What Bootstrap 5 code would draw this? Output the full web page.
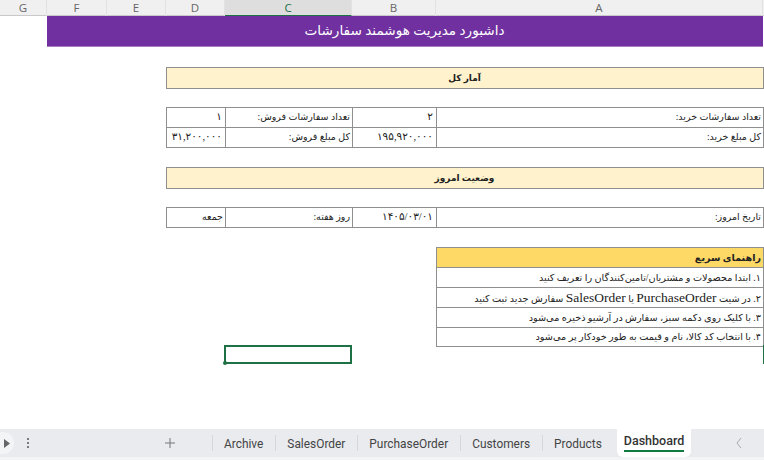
<!DOCTYPE html>
<html lang="fa">

<head>
    <meta charset="UTF-8">
    <meta name="viewport" content="width=device-width, initial-scale=1.0">
    <title>Dashboard</title>
    <link href="https://cdn.jsdelivr.net/npm/bootstrap@5.3.0/dist/css/bootstrap.min.css" rel="stylesheet">
    <script defer src="https://cdn.jsdelivr.net/npm/bootstrap@5.3.0/dist/js/bootstrap.bundle.min.js"></script>
    <style>
        html, body { height: 460px; overflow: hidden; background: #fff; }
        body { font-family: "Liberation Serif", "DejaVu Sans", serif; color: #222; }
        .col-heads { display: grid; grid-template-columns: 47px 60px 59px 59px 127px 84px 327px 1px; height: 16px; background: #f0f0f0; border-bottom: 1px solid #c9c9c9; font: 11.5px/15px "Open Sans", sans-serif; color: #666; }
        .col-heads div { text-align: center; border-right: 1px solid #e2e2e2; }
        .col-heads .picked { background: #dedede; color: #1e7145; border-bottom: 1px solid #1e7145; height: 16px; }
        .sheet { display: grid; grid-template-columns: 47px 60px 59px 59px 127px 84px 327px 1px; grid-template-rows: 31px 20px 21px 19px 20px 20px 20px 21px 19px 20px 20px 20px 20px 20px 20px 19px 19px; height: 413px; font-size: 9.5px; direction: ltr; }
        .cell { border: 1px solid #8f8f8f; display: flex; align-items: center; direction: rtl; padding: 0 2px 0 1px; margin: 0 -1px -1px 0; white-space: nowrap; line-height: 1; background: #fff; }
        .num-cell { font-size: 10.5px; padding-right: 3px; }
        .title-bar { grid-column: 2 / 8; grid-row: 1; background: #7030a0; color: #fff; font-size: 13.6px; justify-content: center; border: 0; border-bottom: 1px solid #a77cc6; margin: 0; }
        .band { grid-column: 4 / 8; background: #fff2cc; font-weight: 700; justify-content: center; font-size: 9px; }
        .guide-head { grid-column: 7 / 8; grid-row: 12; background: #ffd966; font-weight: 700; font-size: 9.6px; }
        .guide-row { grid-column: 7 / 8; font-size: 9.7px; }
        .latin-run { font-size: 13.5px; }
        .c-a { grid-column: 7; } .c-b { grid-column: 6; } .c-c { grid-column: 5; } .c-d { grid-column: 4; }
        .r-3 { grid-row: 3; } .r-5 { grid-row: 5; } .r-6 { grid-row: 6; } .r-8 { grid-row: 8; } .r-10 { grid-row: 10; }
        .r-13 { grid-row: 13; } .r-14 { grid-row: 14; } .r-15 { grid-row: 15; } .r-16 { grid-row: 16; }
        .picked-cell { grid-column: 5; grid-row: 17; height: 19px; border: 2px solid #1e7145; margin: -1px 0 0 -1px; position: relative; }
        .picked-cell::after { content: ""; position: absolute; left: -3px; bottom: -3px; width: 4px; height: 4px; background: #1e7145; border-radius: 50%; }
        .edge-mark { grid-column: 8; grid-row: 17; height: 19px; margin-top: -1px; background: #1e7145; }
        .tabs-bar { height: 28px; background: #e9ebef; display: flex; align-items: center; font: 11.9px Roboto, sans-serif; color: #444; direction: ltr; }
        .tabs-bar svg { flex-shrink: 0; }
        .play-btn { width: 14px; height: 22px; flex-shrink: 0; background: #f3f4f6; border-radius: 0 11px 11px 0; display: flex; align-items: center; padding-left: 4px; }
        .dots-icon { margin-left: 12px; }
        .plus-icon { margin-left: 135px; margin-right: 37px; }
        .sheet-tab { height: 100%; display: flex; align-items: center; padding: 1px 12px 0; position: relative; flex-shrink: 0; }
        .sheet-tab::before { content: ""; position: absolute; left: 0; top: 6px; bottom: 6px; width: 1px; background: #d5d7db; }
        .sheet-tab.on { background: #fff; border-radius: 0 0 6px 6px; font-size: 12.5px; font-weight: 500; color: #333; padding: 0 7px; height: 28px; margin-left: 3px; flex-direction: column; justify-content: center; }
        .sheet-tab.on::before { display: none; }
        .sheet-tab.on span { border-bottom: 2px solid #107c41; line-height: 15px; padding-bottom: 2px; margin-top: -2px; }
        .back-icon { margin-left: 45px; }
        .foot-strip { height: 3px; background: #f3f4f6; }
    </style>
</head>

<body>
    <div class="col-heads">
        <div>G</div><div>F</div><div>E</div><div>D</div><div class="picked">C</div><div>B</div><div>A</div>
    </div>

    <div class="sheet">
        <div class="cell title-bar">داشبورد مدیریت هوشمند سفارشات</div>

        <div class="cell band r-3">آمار کل</div>

        <div class="cell c-a r-5">تعداد سفارشات خرید:</div>
        <div class="cell num-cell c-b r-5">۲</div>
        <div class="cell c-c r-5">تعداد سفارشات فروش:</div>
        <div class="cell num-cell c-d r-5">۱</div>
        <div class="cell c-a r-6">کل مبلغ خرید:</div>
        <div class="cell num-cell c-b r-6">۱۹۵,۹۲۰,۰۰۰</div>
        <div class="cell c-c r-6">کل مبلغ فروش:</div>
        <div class="cell num-cell c-d r-6">۳۱,۲۰۰,۰۰۰</div>

        <div class="cell band r-8">وضعیت امروز</div>

        <div class="cell c-a r-10">تاریخ امروز:</div>
        <div class="cell num-cell c-b r-10">۱۴۰۵/۰۳/۰۱</div>
        <div class="cell c-c r-10">روز هفته:</div>
        <div class="cell c-d r-10">جمعه</div>

        <div class="cell guide-head">راهنمای سریع</div>
        <div class="cell guide-row r-13">۱. ابتدا محصولات و مشتریان/تامین‌کنندگان را تعریف کنید</div>
        <div class="cell guide-row r-14"><span>۲. در شیت <span class="latin-run">PurchaseOrder</span> یا <span class="latin-run">SalesOrder</span> سفارش جدید ثبت کنید</span></div>
        <div class="cell guide-row r-15">۳. با کلیک روی دکمه سبز، سفارش در آرشیو ذخیره می‌شود</div>
        <div class="cell guide-row r-16">۴. با انتخاب کد کالا، نام و قیمت به طور خودکار پر می‌شود</div>

        <div class="cell picked-cell"></div>
        <div class="edge-mark"></div>
    </div>

    <div class="tabs-bar">
        <div class="play-btn"><svg width="6" height="9" viewBox="0 0 6 9"><path d="M0 0l6 4.500-6 4.500z" fill="#666"/></svg></div>
        <svg class="dots-icon" width="4" height="12" viewBox="0 0 4 12"><circle cx="2" cy="2" r="1" fill="#555"/><circle cx="2" cy="6" r="1" fill="#555"/><circle cx="2" cy="10" r="1" fill="#555"/></svg>
        <svg class="plus-icon" width="10" height="10" viewBox="0 0 10 10"><path d="M5 0v10M0 5h10" stroke="#777" stroke-width="1"/></svg>
        <div class="sheet-tab">Archive</div>
        <div class="sheet-tab">SalesOrder</div>
        <div class="sheet-tab">PurchaseOrder</div>
        <div class="sheet-tab">Customers</div>
        <div class="sheet-tab">Products</div>
        <div class="sheet-tab on"><span>Dashboard</span></div>
        <svg class="back-icon" width="6" height="10" viewBox="0 0 6 10"><path d="M5 0L1 5l4 5" fill="none" stroke="#aaa"/></svg>
    </div>
    <div class="foot-strip"></div>
</body>

</html>
